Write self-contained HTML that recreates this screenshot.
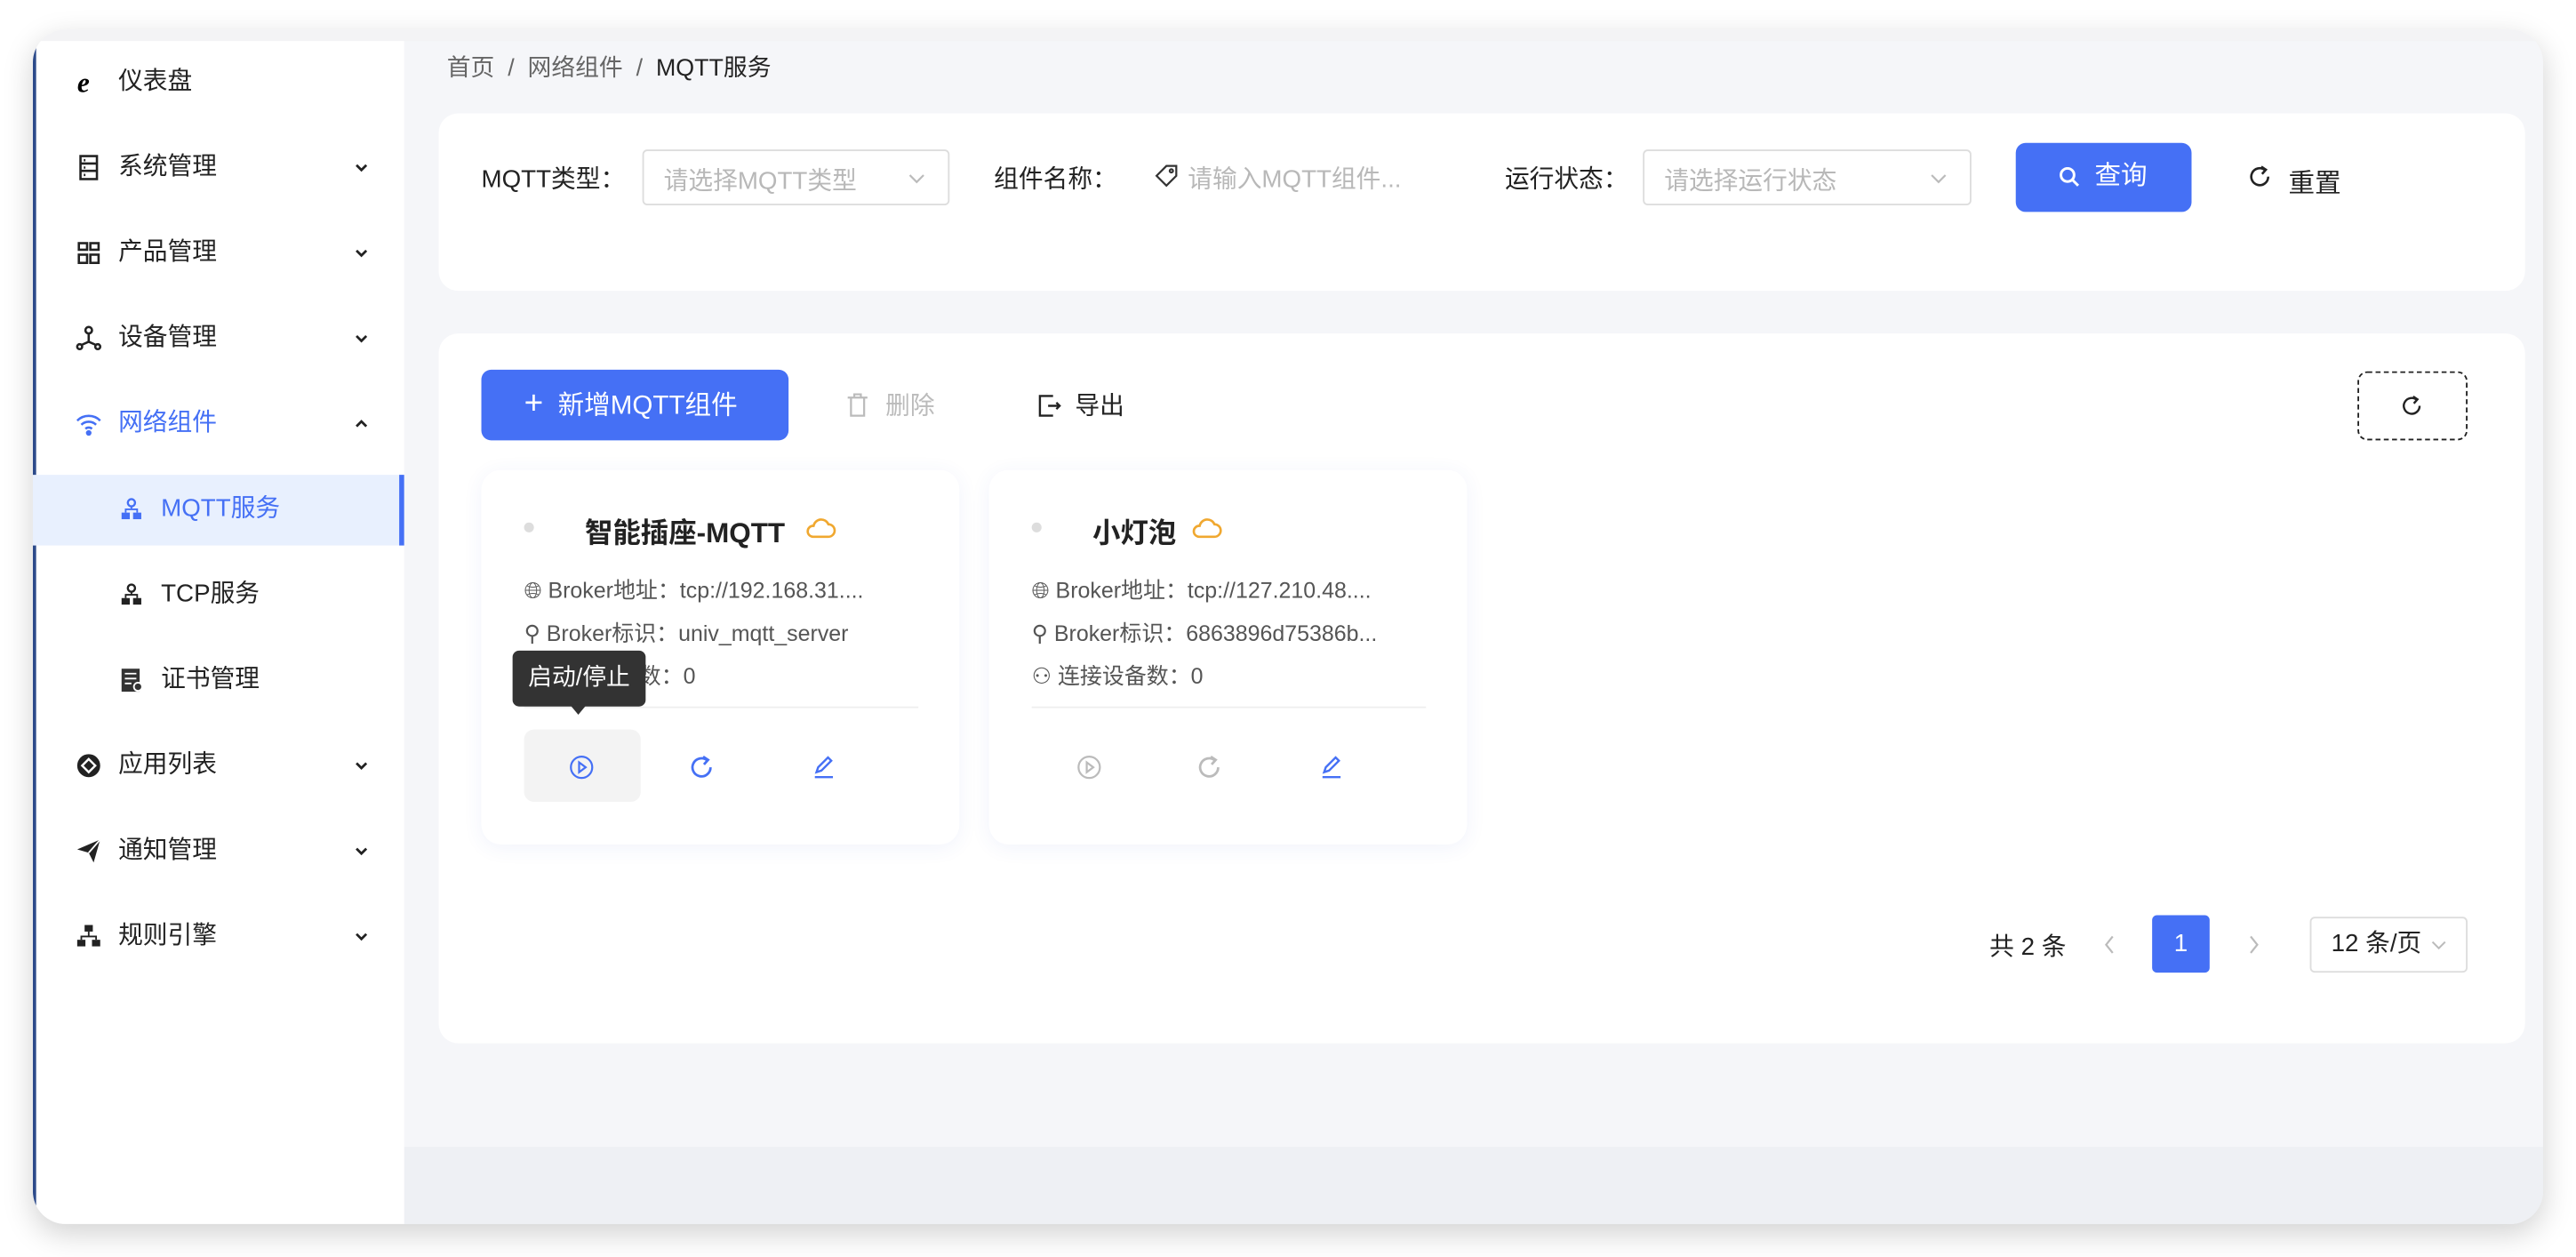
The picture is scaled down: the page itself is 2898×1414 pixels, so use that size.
<!DOCTYPE html>
<html><head><meta charset="utf-8">
<style>
*{box-sizing:border-box;margin:0;padding:0}
html,body{width:2898px;height:1414px;overflow:hidden;background:#fff}
#s{position:absolute;left:0;top:0;width:1568px;height:765px;transform:scale(1.8482);transform-origin:0 0;font-family:"Liberation Sans","Noto Sans CJK SC",sans-serif;color:#222;font-size:15px}
.a{position:absolute}
.win{left:20px;top:18px;width:1528px;height:727px;border-radius:20px;background:#f5f6f9;overflow:hidden;box-shadow:0 6px 18px rgba(0,0,0,.18)}
.side{left:0;top:7px;width:226px;height:720px;background:#fff;border-left:2px solid #2c4a8a}
.mi{position:absolute;left:0;width:226px;height:52px;line-height:52px;padding-left:50px;font-size:15px}
.mi .ic{position:absolute;left:24px;top:18px;width:16px;height:16px}
.ch{position:absolute;left:193px;top:21px;width:10px;height:10px}
.card{background:#fff;border-radius:12px}
.t{white-space:nowrap}
.gray{color:#666}
.ph{color:#b8b8b8}
.sel{border:1px solid #ddd;border-radius:3px;background:#fff}
.ln{font-size:13.5px;color:#555;white-space:nowrap}
</style></head><body><div id="s">
<svg width="0" height="0" style="position:absolute"><defs>
<symbol id="chev" viewBox="0 0 10 10"><path d="M2 3.5l3 3 3-3" fill="none" stroke="#222" stroke-width="1.5"/></symbol>
<symbol id="rf" viewBox="0 0 16 16"><path d="M13.5 8A5.5 5.5 0 1 1 11.5 3.8" fill="none" stroke="currentColor" stroke-width="1.5"/><path d="M9 1.5l3 2-2.5 2.8" fill="none" stroke="currentColor" stroke-width="1.5"/></symbol>
<symbol id="cloud" viewBox="0 0 20 14"><path d="M5 13h10a4 4 0 0 0 0-8 5 5 0 0 0-9.5 1A3.5 3.5 0 0 0 5 13z" fill="none" stroke="#f0a830" stroke-width="1.5"/></symbol>
</defs></svg>
<div class="a win">
  <div class="a" style="left:0;top:0;width:1528px;height:7px;background:#f3f3f5"></div>
  <div class="a" style="left:226px;top:680px;width:1302px;height:47px;background:#eef0f4"></div>
  <div class="a side">
    <div class="mi" style="top:-1px"><svg class="ic" viewBox="0 0 16 16"><text x="1" y="14" font-size="17" font-weight="bold" font-style="italic" font-family="Liberation Serif">e</text></svg>仪表盘</div>
    <div class="mi" style="top:51px"><svg class="ic" viewBox="0 0 16 16" fill="none" stroke="#222" stroke-width="1.4"><rect x="3" y="1" width="10" height="14"/><path d="M3 5.5h10M3 10h10M5 3.5h1M5 8h1M5 12.5h1"/></svg>系统管理<svg class="ch"><use href="#chev"/></svg></div>
    <div class="mi" style="top:103px"><svg class="ic" viewBox="0 0 16 16" fill="none" stroke="#222" stroke-width="1.4"><rect x="2" y="2" width="5" height="4"/><rect x="9" y="2" width="5" height="4"/><rect x="2" y="9" width="5" height="5"/><rect x="9" y="9" width="5" height="5"/></svg>产品管理<svg class="ch"><use href="#chev"/></svg></div>
    <div class="mi" style="top:155px"><svg class="ic" viewBox="0 0 16 16" fill="none" stroke="#222" stroke-width="1.4"><circle cx="8" cy="3" r="2"/><circle cx="2.5" cy="13" r="1.5"/><circle cx="13.5" cy="13" r="1.5"/><path d="M8 5v5L3.5 12M8 10l4.5 2"/></svg>设备管理<svg class="ch"><use href="#chev"/></svg></div>
    <div class="mi" style="top:207px;color:#4570f5"><svg class="ic" viewBox="0 0 16 16" fill="none" stroke="#4570f5" stroke-width="1.4"><path d="M1 6a10 10 0 0 1 14 0M3.5 8.5a6.5 6.5 0 0 1 9 0M6 11a3 3 0 0 1 4 0"/><circle cx="8" cy="13.5" r="1" fill="#4570f5"/></svg>网络组件<svg class="ch" style="transform:rotate(180deg)"><use href="#chev"/></svg></div>
    <div class="a" style="left:-2px;top:264px;width:226px;height:43px;background:#e8f0fe;border-right:3px solid #4570f5"></div>
    <div class="mi" style="top:259px;padding-left:76px;color:#4570f5"><svg class="ic" style="left:50px" viewBox="0 0 16 16" fill="#4570f5"><circle cx="8" cy="4" r="2.2" fill="none" stroke="#4570f5" stroke-width="1.3"/><rect x="2" y="10" width="5" height="4"/><rect x="9" y="10" width="5" height="4"/><path d="M8 6v2H4.5v2M8 8h3.5v2" fill="none" stroke="#4570f5"/></svg>MQTT服务</div>
    <div class="mi" style="top:311px;padding-left:76px"><svg class="ic" style="left:50px" viewBox="0 0 16 16" fill="#222"><circle cx="8" cy="4" r="2.2" fill="none" stroke="#222" stroke-width="1.3"/><rect x="2" y="10" width="5" height="4"/><rect x="9" y="10" width="5" height="4"/><path d="M8 6v2H4.5v2M8 8h3.5v2" fill="none" stroke="#222"/></svg>TCP服务</div>
    <div class="mi" style="top:363px;padding-left:76px"><svg class="ic" style="left:50px" viewBox="0 0 16 16"><rect x="2" y="1" width="11" height="14" fill="#333"/><path d="M4 4h7M4 7h7M4 10h4" stroke="#fff"/><circle cx="12" cy="12" r="2.5" fill="#333" stroke="#fff"/></svg>证书管理</div>
    <div class="mi" style="top:415px"><svg class="ic" viewBox="0 0 16 16"><circle cx="8" cy="8" r="7" fill="#222"/><path d="M8 4l4 4-4 4-4-4z" fill="none" stroke="#fff" stroke-width="1.3"/></svg>应用列表<svg class="ch"><use href="#chev"/></svg></div>
    <div class="mi" style="top:467px"><svg class="ic" viewBox="0 0 16 16"><path d="M1 7L15 1 11 15 8 9z" fill="#222"/><path d="M8 9l7-8" stroke="#fff"/></svg>通知管理<svg class="ch"><use href="#chev"/></svg></div>
    <div class="mi" style="top:519px"><svg class="ic" viewBox="0 0 16 16" fill="#222"><rect x="5.5" y="1" width="5" height="4"/><rect x="1" y="10" width="5" height="4"/><rect x="10" y="10" width="5" height="4"/><path d="M8 5v3H3.5v2M8 8h4.5v2" fill="none" stroke="#222"/></svg>规则引擎<svg class="ch"><use href="#chev"/></svg></div>
  </div>
  <div class="a t gray" style="left:252px;top:12px;font-size:14.5px">首页 &nbsp;/&nbsp; 网络组件 &nbsp;/&nbsp; <span style="color:#222">MQTT服务</span></div>

  <div class="a card" style="left:247px;top:51px;width:1270px;height:108px"></div>
  <div class="a t" style="left:273px;top:80px">MQTT类型：</div>
  <div class="a sel" style="left:371px;top:73px;width:187px;height:34px"><span class="a ph t" style="left:12px;top:7px">请选择MQTT类型</span><svg class="a" style="left:160px;top:11px" width="12" height="12" viewBox="0 0 10 10"><path d="M1.5 3l3.5 3.5L8.5 3" fill="none" stroke="#bbb" stroke-width="1"/></svg></div>
  <div class="a t" style="left:585px;top:80px">组件名称：</div>
  <svg class="a" style="left:683px;top:82px" width="14" height="14" viewBox="0 0 14 14" fill="none" stroke="#333" stroke-width="1.2"><path d="M1 7L7 1h6v6l-6 6z"/><circle cx="10" cy="4" r="1"/></svg>
  <div class="a ph t" style="left:703px;top:80px">请输入MQTT组件...</div>
  <div class="a t" style="left:896px;top:80px">运行状态：</div>
  <div class="a sel" style="left:980px;top:73px;width:200px;height:34px"><span class="a ph t" style="left:12px;top:7px">请选择运行状态</span><svg class="a" style="left:173px;top:11px" width="12" height="12" viewBox="0 0 10 10"><path d="M1.5 3l3.5 3.5L8.5 3" fill="none" stroke="#bbb" stroke-width="1"/></svg></div>
  <div class="a t" style="left:1207px;top:69px;width:107px;height:42px;background:#4570f5;border-radius:6px;color:#fff;line-height:42px;padding-left:26px;font-size:16px"><svg style="position:absolute;left:26px;top:14px" width="13" height="13" viewBox="0 0 13 13" fill="none" stroke="#fff" stroke-width="1.6"><circle cx="5.5" cy="5.5" r="4"/><path d="M8.5 8.5l3.5 3.5"/></svg><span style="margin-left:22px">查询</span></div>
  <svg class="a" style="left:1348px;top:82px;color:#222" width="15" height="15"><use href="#rf"/></svg>
  <div class="a t" style="left:1373px;top:80px;font-size:16px">重置</div>

  <div class="a card" style="left:247px;top:185px;width:1270px;height:432px"></div>
  <div class="a t" style="left:273px;top:207px;width:187px;height:43px;background:#4570f5;border-radius:6px;color:#fff;line-height:43px;padding-left:26px;font-size:16px"><span style="font-size:20px;font-weight:300">+</span>&nbsp; 新增MQTT组件</div>
  <svg class="a" style="left:495px;top:221px" width="14" height="15" viewBox="0 0 14 15" fill="none" stroke="#bbb" stroke-width="1.2"><path d="M1 3h12M5 3V1h4v2M3 3v11h8V3"/></svg>
  <div class="a t" style="left:519px;top:218px;color:#bbb">删除</div>
  <div class="a t" style="left:612px;top:218px"><svg width="14" height="14" viewBox="0 0 14 14" fill="none" stroke="#222" stroke-width="1.3" style="vertical-align:-2px"><path d="M9 1H1v12h8M6 7h7M11 5l2 2-2 2"/></svg>&nbsp; 导出</div>
  <div class="a" style="left:1415px;top:208px;width:67px;height:42px;border:1.5px dashed #222;border-radius:6px"><svg class="a" style="left:25px;top:13px;color:#222" width="14" height="14"><use href="#rf"/></svg></div>

  <!-- card 1 -->
  <div class="a card" style="left:273px;top:268px;width:291px;height:228px;box-shadow:0 2px 12px rgba(60,90,200,.07)"></div>
  <div class="a" style="left:299px;top:300px;width:6px;height:6px;border-radius:50%;background:#ddd"></div>
  <div class="a t" style="left:336px;top:292px;font-size:17px;font-weight:bold">智能插座-MQTT</div>
  <svg class="a" style="left:470px;top:296px" width="19" height="14"><use href="#cloud"/></svg>
  <div class="a ln" style="left:299px;top:330px">🌐︎ Broker地址：tcp://192.168.31....</div>
  <div class="a ln" style="left:299px;top:356px">⚲ Broker标识：univ_mqtt_server</div>
  <div class="a ln" style="left:299px;top:382px">⚇ 连接设备数：0</div>
  <div class="a" style="left:299px;top:412px;width:240px;height:1px;background:#eee"></div>
  <div class="a" style="left:299px;top:426px;width:71px;height:44px;background:#f3f3f3;border-radius:6px"></div>
  <svg class="a" style="left:326px;top:441px" width="16" height="16" viewBox="0 0 16 16" fill="none" stroke="#4570f5" stroke-width="1.2"><circle cx="8" cy="8" r="6.5"/><path d="M6.5 5v6l4-3z"/></svg>
  <svg class="a" style="left:399px;top:441px;color:#4570f5" width="16" height="16"><use href="#rf"/></svg>
  <svg class="a" style="left:474px;top:441px" width="15" height="15" viewBox="0 0 15 15" fill="none" stroke="#4570f5" stroke-width="1.3"><path d="M3 11l1-3 6-6 2 2-6 6zM2 14h11"/></svg>
  <div class="a t" style="left:292px;top:378px;width:81px;height:34px;background:#333;border-radius:4px;color:#fff;line-height:34px;text-align:center;font-size:14.5px">启动/停止</div>
  <div class="a" style="left:327px;top:411px;width:0;height:0;border-left:5px solid transparent;border-right:5px solid transparent;border-top:6px solid #333"></div>

  <!-- card 2 -->
  <div class="a card" style="left:582px;top:268px;width:291px;height:228px;box-shadow:0 2px 12px rgba(60,90,200,.07)"></div>
  <div class="a" style="left:608px;top:300px;width:6px;height:6px;border-radius:50%;background:#ddd"></div>
  <div class="a t" style="left:645px;top:292px;font-size:17px;font-weight:bold">小灯泡</div>
  <svg class="a" style="left:705px;top:296px" width="19" height="14"><use href="#cloud"/></svg>
  <div class="a ln" style="left:608px;top:330px">🌐︎ Broker地址：tcp://127.210.48....</div>
  <div class="a ln" style="left:608px;top:356px">⚲ Broker标识：6863896d75386b...</div>
  <div class="a ln" style="left:608px;top:382px">⚇ 连接设备数：0</div>
  <div class="a" style="left:608px;top:412px;width:240px;height:1px;background:#eee"></div>
  <svg class="a" style="left:635px;top:441px" width="16" height="16" viewBox="0 0 16 16" fill="none" stroke="#bbb" stroke-width="1.2"><circle cx="8" cy="8" r="6.5"/><path d="M6.5 5v6l4-3z"/></svg>
  <svg class="a" style="left:708px;top:441px;color:#bbb" width="16" height="16"><use href="#rf"/></svg>
  <svg class="a" style="left:783px;top:441px" width="15" height="15" viewBox="0 0 15 15" fill="none" stroke="#4570f5" stroke-width="1.3"><path d="M3 11l1-3 6-6 2 2-6 6zM2 14h11"/></svg>

  <!-- pagination -->
  <div class="a t" style="left:1191px;top:547px">共 2 条</div>
  <svg class="a" style="left:1259px;top:550px" width="10" height="14" viewBox="0 0 10 14"><path d="M7 2L3 7l4 5" fill="none" stroke="#bbb" stroke-width="1.2"/></svg>
  <div class="a" style="left:1290px;top:539px;width:35px;height:35px;background:#4570f5;border-radius:3px;color:#fff;text-align:center;line-height:35px">1</div>
  <svg class="a" style="left:1347px;top:550px" width="10" height="14" viewBox="0 0 10 14"><path d="M3 2l4 5-4 5" fill="none" stroke="#bbb" stroke-width="1.2"/></svg>
  <div class="a sel t" style="left:1386px;top:540px;width:96px;height:34px;line-height:32px;padding-left:12px">12 条/页<svg class="a" style="left:72px;top:11px" width="11" height="11" viewBox="0 0 10 10"><path d="M1.5 3l3.5 3.5L8.5 3" fill="none" stroke="#bbb" stroke-width="1"/></svg></div>
</div>
</div></body></html>
